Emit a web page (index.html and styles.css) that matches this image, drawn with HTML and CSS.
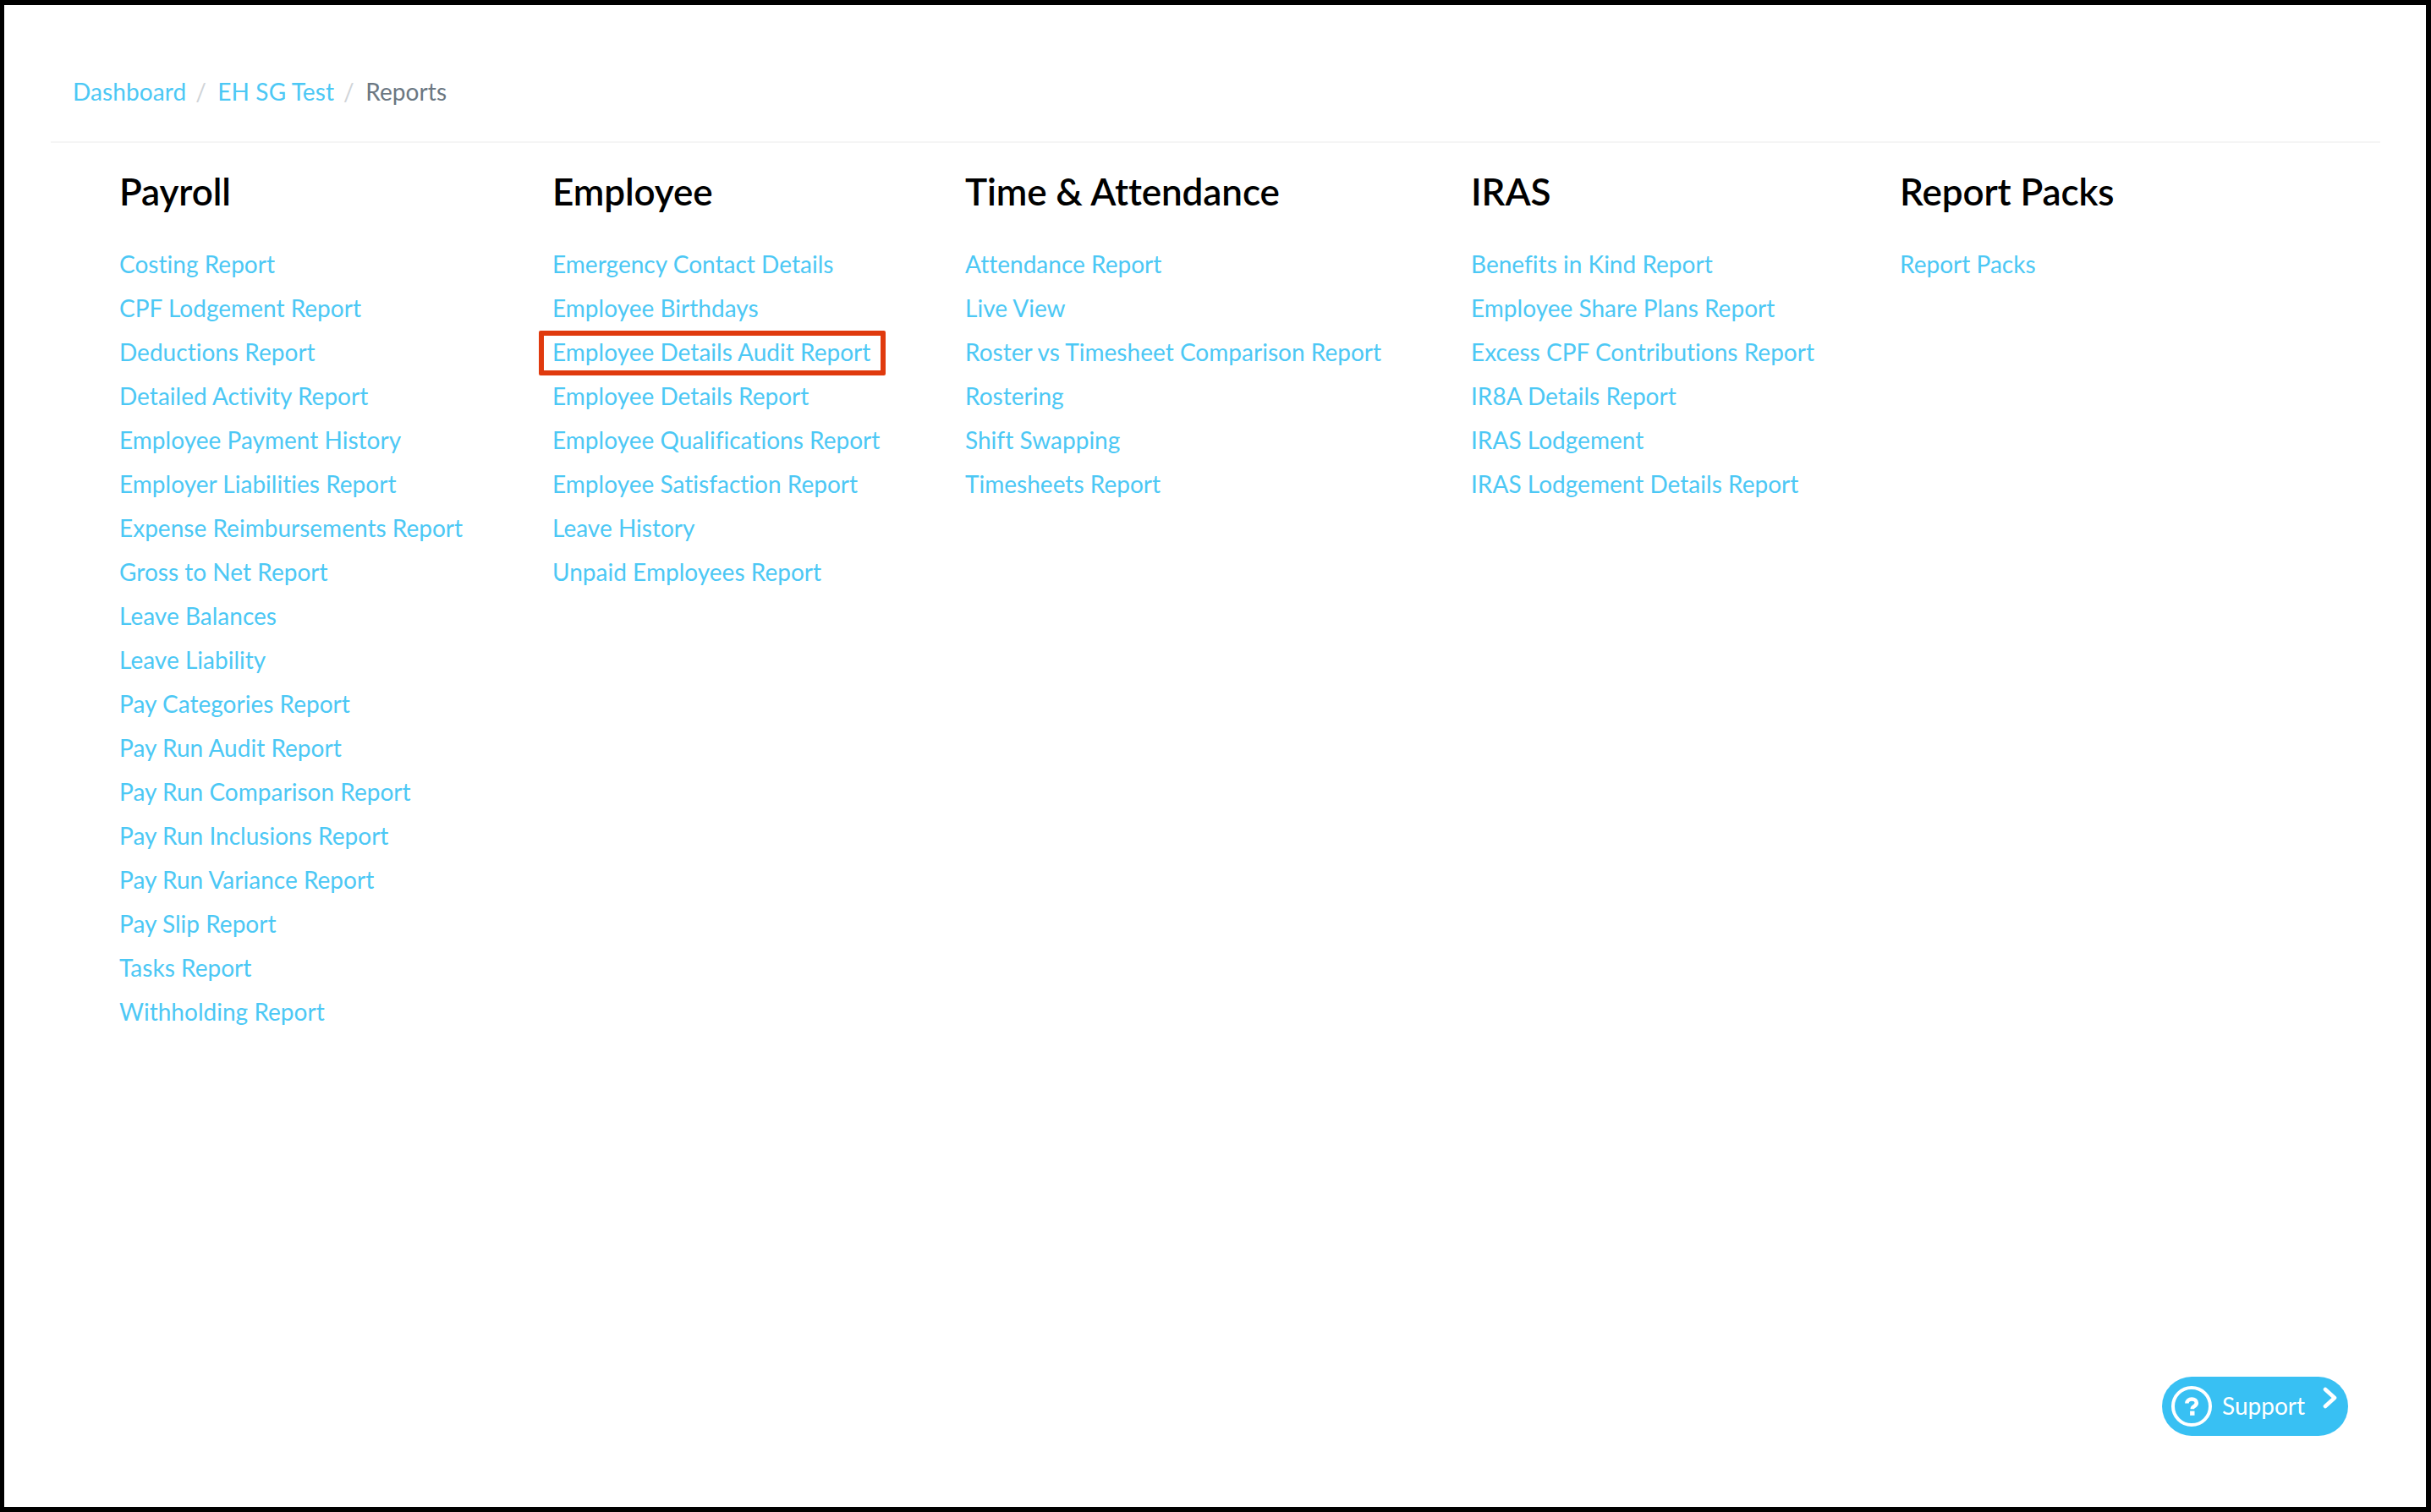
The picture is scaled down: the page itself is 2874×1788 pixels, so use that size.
FILE: index.html
```html
<!DOCTYPE html>
<html lang="en">
<head>
<meta charset="utf-8">
<title>Reports</title>
<link rel="stylesheet" href="styles.css">
</head>
<body>
<div class="frame">
  <nav class="crumbs">
    <a href="#">Dashboard</a><span class="sep">/</span>
    <a href="#">EH SG Test</a><span class="sep">/</span>
    <span class="current">Reports</span>
  </nav>
  <main class="columns">
    <section>
      <h2>Payroll</h2>
      <ul>
        <li><a href="#">Costing Report</a></li>
        <li><a href="#">CPF Lodgement Report</a></li>
        <li><a href="#">Deductions Report</a></li>
        <li><a href="#">Detailed Activity Report</a></li>
        <li><a href="#">Employee Payment History</a></li>
        <li><a href="#">Employer Liabilities Report</a></li>
        <li><a href="#">Expense Reimbursements Report</a></li>
        <li><a href="#">Gross to Net Report</a></li>
        <li><a href="#">Leave Balances</a></li>
        <li><a href="#">Leave Liability</a></li>
        <li><a href="#">Pay Categories Report</a></li>
        <li><a href="#">Pay Run Audit Report</a></li>
        <li><a href="#">Pay Run Comparison Report</a></li>
        <li><a href="#">Pay Run Inclusions Report</a></li>
        <li><a href="#">Pay Run Variance Report</a></li>
        <li><a href="#">Pay Slip Report</a></li>
        <li><a href="#">Tasks Report</a></li>
        <li><a href="#">Withholding Report</a></li>
      </ul>
    </section>
    <section>
      <h2>Employee</h2>
      <ul>
        <li><a href="#">Emergency Contact Details</a></li>
        <li><a href="#">Employee Birthdays</a></li>
        <li class="marked"><a href="#">Employee Details Audit Report</a><span class="highlight"></span></li>
        <li><a href="#">Employee Details Report</a></li>
        <li><a href="#">Employee Qualifications Report</a></li>
        <li><a href="#">Employee Satisfaction Report</a></li>
        <li><a href="#">Leave History</a></li>
        <li><a href="#">Unpaid Employees Report</a></li>
      </ul>
    </section>
    <section>
      <h2>Time &amp; Attendance</h2>
      <ul>
        <li><a href="#">Attendance Report</a></li>
        <li><a href="#">Live View</a></li>
        <li><a href="#">Roster vs Timesheet Comparison Report</a></li>
        <li><a href="#">Rostering</a></li>
        <li><a href="#">Shift Swapping</a></li>
        <li><a href="#">Timesheets Report</a></li>
      </ul>
    </section>
    <section>
      <h2>IRAS</h2>
      <ul>
        <li><a href="#">Benefits in Kind Report</a></li>
        <li><a href="#">Employee Share Plans Report</a></li>
        <li><a href="#">Excess CPF Contributions Report</a></li>
        <li><a href="#">IR8A Details Report</a></li>
        <li><a href="#">IRAS Lodgement</a></li>
        <li><a href="#">IRAS Lodgement Details Report</a></li>
      </ul>
    </section>
    <section>
      <h2>Report Packs</h2>
      <ul>
        <li><a href="#">Report Packs</a></li>
      </ul>
    </section>
  </main>
  <a class="support" href="#">
    <svg class="help" viewBox="0 0 48 48" width="48" height="48" aria-hidden="true">
      <circle cx="24" cy="24" r="22" fill="none" stroke="#fff" stroke-width="4"/>
      <path d="M18.4 20.6c0-3.1 2.4-5.1 5.8-5.1 3.3 0 5.6 1.9 5.6 4.5 0 2-1.2 3-2.9 4.1-1.5.9-2.1 1.5-2.1 3.1" fill="none" stroke="#fff" stroke-width="4.6"/>
      <rect x="22.1" y="29.6" width="5.4" height="5.2" fill="#fff"/>
    </svg>
    <span class="support-label">Support</span>
    <svg class="chev" viewBox="0 0 18 26" width="18" height="26" aria-hidden="true">
      <path d="M3 3l11 10L3 23" fill="none" stroke="#fff" stroke-width="4.6" stroke-linecap="round" stroke-linejoin="round"/>
    </svg>
  </a>
</div>
</body>
</html>
```
FILE: styles.css
```css
* { box-sizing: border-box; }
html, body { margin: 0; padding: 0; background: #000; }
body { width: 2874px; height: 1788px; font-family: "Lato", "Liberation Sans", sans-serif; }
.frame {
  position: relative;
  width: 2874px;
  height: 1788px;
  background: #fff;
  border: solid #000;
  border-width: 6px 6px 6px 5px;
  padding: 0 54px 0 55px;
}
a { color: #4cc8f5; text-decoration: none; }
.crumbs {
  height: 163px;
  border-bottom: 2px solid #f5f5f5;
  padding: 82px 0 0 26px;
  font-size: 28px;
  line-height: 40px;
  letter-spacing: 0.1px;
}
.sep { color: #d0d4d8; margin: 0 6px 0 11px; }
.current { color: #6b7782; }
.columns {
  display: grid;
  grid-template-columns: 512px 488px 598px 507px 1fr;
  padding: 30px 0 0 81px;
}
h2 {
  margin: 0 0 33px;
  font-size: 44px;
  line-height: 54px;
  font-weight: 600;
  color: #000;
  letter-spacing: -0.1px;
}
ul { list-style: none; margin: 0; padding: 0; }
li {
  height: 52px;
  font-size: 28px;
  line-height: 52px;
  letter-spacing: 0.02px;
  white-space: nowrap;
}
.marked { position: relative; }
.highlight {
  position: absolute;
  left: -16px;
  top: 1px;
  width: 410px;
  height: 53px;
  border: 6px solid #e03a0e;
  border-radius: 2px;
}
.support {
  position: absolute;
  left: 2551px;
  top: 1622px;
  width: 220px;
  height: 70px;
  border-radius: 35px;
  background: #38c0f3;
  display: flex;
  align-items: center;
  color: #fff;
  font-size: 28px;
  padding-left: 11px;
}
.help { flex: none; }
.support-label { margin: -2px 0 0 12px; letter-spacing: 0; }
.chev { flex: none; margin: -20px 0 0 21px; }
```
